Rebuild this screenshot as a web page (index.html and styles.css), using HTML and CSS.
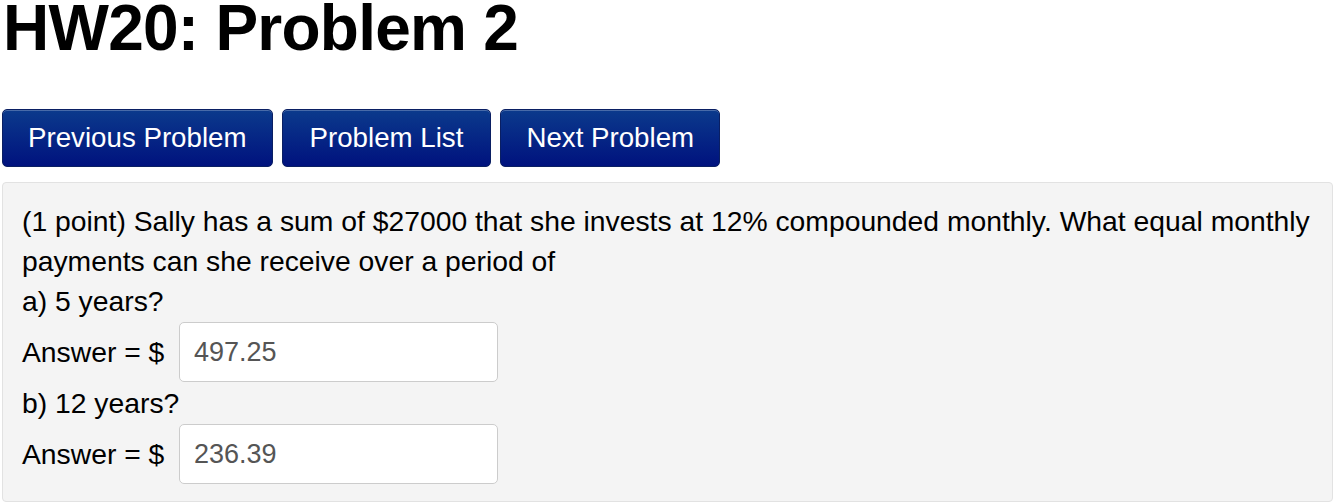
FILE: index.html
```html
<!DOCTYPE html>
<html>
<head>
<meta charset="utf-8">
<link rel="stylesheet" href="styles.css">
</head>
<body>
<div class="page">
  <h1 class="title">HW20: Problem 2</h1>
  <div class="nav">
    <a class="btn">Previous Problem</a>
    <a class="btn btn-list">Problem List</a>
    <a class="btn">Next Problem</a>
  </div>
  <div class="problem">
    <div class="line">(1 point) Sally has a sum of $27000 that she invests at 12% compounded monthly. What equal monthly payments can she receive over a period of</div>
    <div class="line">a) 5 years?</div>
    <div class="answer-row">
      <span class="label">Answer = $</span>
      <input class="answer" type="text" value="497.25">
    </div>
    <div class="line">b) 12 years?</div>
    <div class="answer-row">
      <span class="label">Answer = $</span>
      <input class="answer" type="text" value="236.39">
    </div>
  </div>
</div>
</body>
</html>
```
FILE: styles.css
```css
html, body {
  margin: 0;
  padding: 0;
  background: #ffffff;
}
.page {
  padding: 0 11px 0 2px;
  font-family: "Liberation Sans", Arial, Helvetica, sans-serif;
  color: #000;
}
.title {
  margin: 0 0 53px 1px;
  font-size: 64px;
  line-height: 56px;
  font-weight: bold;
  letter-spacing: -0.75px;
}
.nav {
  display: flex;
  gap: 9px;
  margin-bottom: 15px;
}
.btn {
  display: block;
  height: 58px;
  box-sizing: border-box;
  padding: 0 25px;
  font-size: 27.7px;
  line-height: 56px;
  color: #fff;
  border: 1px solid #0a1f63;
  border-radius: 5px;
  background: linear-gradient(#0b3a8c, #00127e);
  box-shadow: inset 0 1px 0 rgba(255,255,255,0.25);
}
.btn-list {
  padding: 0 27px;
}
.problem {
  border: 1px solid #e2e2e2;
  border-radius: 4px;
  background: #f4f4f4;
  padding: 18px 19px 16px 19px;
  font-size: 28.3px;
  line-height: 40px;
}
.answer-row {
  display: flex;
  align-items: center;
  height: 62px;
}
.label {
  width: 157px;
  white-space: nowrap;
}
.answer {
  width: 319px;
  height: 60px;
  box-sizing: border-box;
  border: 1px solid #cccccc;
  border-radius: 5px;
  background: #fff;
  padding: 0 14px;
  font-family: "Liberation Sans", Arial, Helvetica, sans-serif;
  font-size: 27px;
  color: #555;
  margin: 0;
}
```
